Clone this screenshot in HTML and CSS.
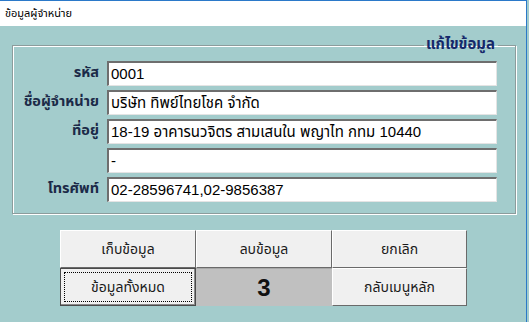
FILE: index.html
```html
<!DOCTYPE html>
<html lang="th">
<head>
<meta charset="utf-8">
<title>ข้อมูลผู้จำหน่าย</title>
<link rel="stylesheet" href="styles.css">
</head>
<body>
<div class="window">
  <div class="titlebar">ข้อมูลผู้จำหน่าย</div>
  <div class="client">
    <fieldset class="frame">
      <legend class="frame-title">แก้ไขข้อมูล</legend>
      <div class="form">
        <label class="lbl">รหัส</label>
        <div class="field">0001</div>
        <label class="lbl">ชื่อผู้จำหน่าย</label>
        <div class="field">บริษัท ทิพย์ไทยโชค จำกัด</div>
        <label class="lbl">ที่อยู่</label>
        <div class="field">18-19 อาคารนวจิตร สามเสนใน พญาไท กทม 10440</div>
        <span class="lbl"></span>
        <div class="field">-</div>
        <label class="lbl">โทรศัพท์</label>
        <div class="field">02-28596741,02-9856387</div>
      </div>
    </fieldset>
    <div class="buttons">
      <button class="btn">เก็บข้อมูล</button>
      <button class="btn">ลบข้อมูล</button>
      <button class="btn">ยกเลิก</button>
      <button class="btn btn-focus"><span class="focus-rect">ข้อมูลทั้งหมด</span></button>
      <div class="counter">3</div>
      <button class="btn">กลับเมนูหลัก</button>
    </div>
  </div>
</div>
</body>
</html>
```
FILE: styles.css
```css
html, body {
  margin: 0;
  padding: 0;
  width: 529px;
  height: 322px;
  overflow: hidden;
  background: #a3cccc;
}
.window {
  width: 527px;
  height: 322px;
  border-top: 1px solid #2b79c9;
  border-right: 1px solid #2b79c9;
  box-sizing: border-box;
  font-family: Tahoma, "Noto Sans Thai", "Noto Sans", "DejaVu Sans", sans-serif;
  display: flex;
  flex-direction: column;
}
.titlebar {
  height: 25px;
  background: #ffffff;
  font-size: 11px;
  line-height: 25px;
  padding-left: 5px;
  color: #000;
}
.client {
  flex: 1;
  background: #a3cccc;
  padding: 10px 0 0 12px;
}
.frame {
  margin: 0;
  width: 504px;
  height: 178px;
  box-sizing: border-box;
  border: 1px solid #8c9c9c;
  box-shadow: inset 1px 1px 0 #ffffff, 1px 1px 0 #ffffff;
  padding: 0 17px 0 0;
}
.frame-title {
  margin-left: auto;
  margin-right: 0;
  padding: 0 3px 0 2px;
  font-size: 15px;
  font-weight: bold;
  color: #15286a;
  line-height: 18px;
}
.form {
  display: grid;
  grid-template-columns: 86px 390px;
  column-gap: 8px;
  row-gap: 4px;
  margin-top: 7px;
}
.lbl {
  text-align: right;
  font-size: 14.5px;
  font-weight: bold;
  color: #1b2a48;
  line-height: 25px;
  height: 25px;
  white-space: nowrap;
}
.field {
  height: 25px;
  box-sizing: border-box;
  background: #ffffff;
  border-top: 2px solid #6e6e6e;
  border-left: 2px solid #6e6e6e;
  border-right: 1px solid #e4e4e4;
  border-bottom: 1px solid #e4e4e4;
  font-family: "Liberation Sans", "Noto Sans Thai", "Noto Sans", sans-serif;
  font-size: 15px;
  line-height: 21px;
  padding-left: 2px;
  color: #000;
  white-space: nowrap;
  overflow: hidden;
}
.buttons {
  margin: 16px 0 0 48px;
  display: grid;
  grid-template-columns: 136px 136px 135px;
  grid-template-rows: 38px 38px;
  width: 407px;
}
.btn {
  margin: 0;
  background: #f0f0f0;
  border: 1px solid;
  border-color: #ffffff #6a6a6a #6a6a6a #ffffff;
  font-family: inherit;
  font-size: 14px;
  color: #1a1a1a;
  padding: 0;
  display: flex;
  align-items: center;
  justify-content: center;
}
.btn-focus {
  border: 1px solid #4a4a4a;
  box-shadow: inset -1px -1px 0 #8a8a8a;
  padding: 3px;
}
.focus-rect {
  flex: 1;
  align-self: stretch;
  border: 1px dotted #000;
  display: flex;
  align-items: center;
  justify-content: center;
}
.counter {
  background: #c0c0c0;
  border-top: 1px solid #a8a8a8;
  display: flex;
  align-items: center;
  justify-content: center;
  font-family: "Liberation Sans", Arial, sans-serif;
  font-weight: bold;
  font-size: 24px;
  color: #111;
}
```
